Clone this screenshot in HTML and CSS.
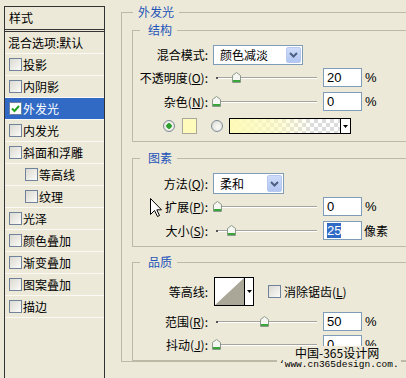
FILE: index.html
```html
<!DOCTYPE html>
<html lang="zh">
  <head>
    <meta charset="UTF-8" />
    <title>图层样式 - 外发光</title>
    <link rel="stylesheet" href="styles.css">
  </head>
  <body>
    <div class="dialog">
      <div class="style-list">
        <div class="list-head">样式</div>
        <div class="list-item blend">混合选项:默认</div>
        <div class="list-item"><span class="check"></span>投影</div>
        <div class="list-item"><span class="check"></span>内阴影</div>
        <div class="list-item selected">
          <span class="check on"><svg width="11" height="11" viewBox="0 0 11 11"><path d="M2 5.5 L4.5 8 L9 3" fill="none" stroke="#21a121" stroke-width="2"/></svg></span>外发光
        </div>
        <div class="list-item"><span class="check"></span>内发光</div>
        <div class="list-item"><span class="check"></span>斜面和浮雕</div>
        <div class="list-item sub"><span class="check"></span>等高线</div>
        <div class="list-item sub"><span class="check"></span>纹理</div>
        <div class="list-item"><span class="check"></span>光泽</div>
        <div class="list-item"><span class="check"></span>颜色叠加</div>
        <div class="list-item"><span class="check"></span>渐变叠加</div>
        <div class="list-item"><span class="check"></span>图案叠加</div>
        <div class="list-item"><span class="check"></span>描边</div>
      </div>

      <fieldset class="group outer">
        <legend>外发光</legend>

        <fieldset class="group inner struct">
          <legend>结构</legend>
          <div class="row h20">
            <span class="lbl">混合模式:</span>
            <div class="select mode"><span>颜色减淡</span><span class="arrow-btn"><svg width="9" height="6" viewBox="0 0 9 6"><path d="M1 1 L4.5 4.5 L8 1" fill="none" stroke="#4d6185" stroke-width="2"/></svg></span></div>
          </div>
          <div class="row h19 mt3">
            <span class="lbl">不透明度(<u>O</u>):</span>
            <div class="slider"><span class="thumb" style="left:23px"><svg width="9" height="11" viewBox="0 0 9 11"><path d="M0.5 10.5 V3.5 L4.5 0.5 L8.5 3.5 V10.5 Z" fill="#f6f6f2" stroke="#8a9a8a"/><rect x="1" y="8" width="7" height="2" fill="#3aa53a"/></svg></span></div>
            <span class="num">20</span><span class="unit">%</span>
          </div>
          <div class="row h19 mt5">
            <span class="lbl">杂色(<u>N</u>):</span>
            <div class="slider"><span class="thumb" style="left:3px"><svg width="9" height="11" viewBox="0 0 9 11"><path d="M0.5 10.5 V3.5 L4.5 0.5 L8.5 3.5 V10.5 Z" fill="#f6f6f2" stroke="#8a9a8a"/><rect x="1" y="8" width="7" height="2" fill="#3aa53a"/></svg></span></div>
            <span class="num">0</span><span class="unit">%</span>
          </div>
          <div class="row color-row">
            <span class="radio on"></span>
            <span class="swatch"></span>
            <span class="radio second"></span>
            <div class="gradient-box">
              <span class="gradient"></span>
              <span class="mini-arrow"><svg width="5" height="3" viewBox="0 0 5 3"><path d="M0 0 H5 L2.5 3 Z" fill="#000"/></svg></span>
            </div>
          </div>
        </fieldset>

        <fieldset class="group inner elements">
          <legend>图素</legend>
          <div class="row h21">
            <span class="lbl">方法(<u>Q</u>):</span>
            <div class="select method"><span>柔和</span><span class="arrow-btn"><svg width="9" height="6" viewBox="0 0 9 6"><path d="M1 1 L4.5 4.5 L8 1" fill="none" stroke="#4d6185" stroke-width="2"/></svg></span></div>
          </div>
          <div class="row h19 mt3">
            <span class="lbl">扩展(<u>P</u>):</span>
            <div class="slider"><span class="thumb" style="left:4px"><svg width="9" height="11" viewBox="0 0 9 11"><path d="M0.5 10.5 V3.5 L4.5 0.5 L8.5 3.5 V10.5 Z" fill="#f6f6f2" stroke="#8a9a8a"/><rect x="1" y="8" width="7" height="2" fill="#3aa53a"/></svg></span></div>
            <span class="num">0</span><span class="unit">%</span>
          </div>
          <div class="row h19 mt5">
            <span class="lbl">大小(<u>S</u>):</span>
            <div class="slider"><span class="thumb" style="left:18px"><svg width="9" height="11" viewBox="0 0 9 11"><path d="M0.5 10.5 V3.5 L4.5 0.5 L8.5 3.5 V10.5 Z" fill="#f6f6f2" stroke="#8a9a8a"/><rect x="1" y="8" width="7" height="2" fill="#3aa53a"/></svg></span></div>
            <span class="num"><span class="sel-text">25</span></span><span class="unit cjk">像素</span>
          </div>
        </fieldset>

        <fieldset class="group inner quality">
          <legend>品质</legend>
          <div class="row h29">
            <span class="lbl">等高线:</span>
            <div class="contour">
              <span class="curve"><svg width="29" height="27" viewBox="0 0 29 27"><rect width="29" height="27" fill="#fff"/><path d="M0 27 L29 0 V27 Z" fill="#aaa698"/></svg></span>
              <span class="mini-arrow"><svg width="5" height="3" viewBox="0 0 5 3"><path d="M0 0 H5 L2.5 3 Z" fill="#000"/></svg></span>
            </div>
            <span class="check aa"></span><span class="aa-text">消除锯齿(<u>L</u>)</span>
          </div>
          <div class="row h19 mt6">
            <span class="lbl">范围(<u>R</u>):</span>
            <div class="slider"><span class="thumb" style="left:51px"><svg width="9" height="11" viewBox="0 0 9 11"><path d="M0.5 10.5 V3.5 L4.5 0.5 L8.5 3.5 V10.5 Z" fill="#f6f6f2" stroke="#8a9a8a"/><rect x="1" y="8" width="7" height="2" fill="#3aa53a"/></svg></span></div>
            <span class="num">50</span><span class="unit">%</span>
          </div>
          <div class="row h19 mt4">
            <span class="lbl">抖动(<u>J</u>):</span>
            <div class="slider"><span class="thumb" style="left:3px"><svg width="9" height="11" viewBox="0 0 9 11"><path d="M0.5 10.5 V3.5 L4.5 0.5 L8.5 3.5 V10.5 Z" fill="#f6f6f2" stroke="#8a9a8a"/><rect x="1" y="8" width="7" height="2" fill="#3aa53a"/></svg></span></div>
            <span class="num">0</span><span class="unit">%</span>
          </div>
        </fieldset>
      </fieldset>

      <svg class="cursor" width="13" height="20" viewBox="0 0 13 20"><path d="M0.5 0.5 V16.5 L4.5 12.5 L7.5 18.5 L9.5 17.5 L6.8 11.8 L11.5 11.8 Z" fill="#fff" stroke="#000"/></svg>

      <div class="watermark">
        <span class="wm-cn">中国-365设计网</span>
        <span class="wm-url">‘www.cn365design.com.</span>
      </div>
    </div>
  </body>
</html>
```

FILE: styles.css
```css
body {
  margin: 0;
  background: #ece9d8;
  font-family: "Noto Sans CJK SC", "Liberation Sans", sans-serif;
  font-size: 12px;
  color: #000;
  overflow: hidden;
}

.dialog {
  position: relative;
  display: flex;
  align-items: flex-start;
  width: 406px;
  height: 378px;
  overflow: hidden;
}

/* left list of styles */
.style-list {
  margin: 6px 0 0 4px;
  width: 101px;
  height: 400px;
  flex-shrink: 0;
  box-sizing: border-box;
  border: 1px solid #333;
  border-bottom: none;
}
.list-head {
  height: 22px;
  line-height: 22px;
  padding-left: 4px;
  border-bottom: 3px double #333;
}
.list-item {
  height: 21px;
  display: flex;
  align-items: center;
  padding-left: 4px;
  border-bottom: 1px solid #faf9f3;
  line-height: 14px;
}
.list-item.blend {
  padding-left: 3px;
}
.list-item.sub {
  padding-left: 20px;
}
.list-item.selected {
  background: #316ac5;
  color: #fff;
}

.check {
  width: 13px;
  height: 13px;
  margin-right: 1px;
  flex-shrink: 0;
  box-sizing: border-box;
  border: 1px solid #71839a;
  background: linear-gradient(135deg, #dad9d1, #fbfbf8);
}
.check.on {
  background: #fff;
  display: flex;
  align-items: center;
  justify-content: center;
}

/* group boxes */
.group {
  margin: 0;
  min-width: 0;
  box-sizing: border-box;
  border: 1px solid #bcb9a6;
}
.group legend {
  padding: 0 5px;
  margin-left: 1px;
  line-height: 14px;
  color: #1f54b8;
}
.outer {
  margin: 5px 0 0 16px;
  width: 330px;
  flex-shrink: 0;
  padding: 4px 0 0 10px;
}
.inner {
  width: 300px;
  padding: 8px 0 6px 0;
}
.inner legend {
  margin-left: 7px;
  padding: 0 5px 0 8px;
}
.struct {
  padding-bottom: 7px;
}
.elements {
  margin-top: 9px;
}
.quality {
  margin-top: 8px;
}

/* rows */
.row {
  display: flex;
  align-items: center;
}
.h19 { height: 19px; }
.h20 { height: 20px; }
.h21 { height: 21px; }
.h29 { height: 29px; }
.mt3 { margin-top: 3px; }
.mt4 { margin-top: 4px; }
.mt5 { margin-top: 5px; }
.mt6 { margin-top: 6px; }

.lbl {
  width: 75px;
  margin-right: 5px;
  flex-shrink: 0;
  text-align: right;
  line-height: 14px;
  white-space: nowrap;
}

.select {
  height: 100%;
  box-sizing: border-box;
  display: flex;
  align-items: center;
  justify-content: space-between;
  padding: 0 1px 0 6px;
  border: 1px solid #7f9db9;
  background: #fff;
  line-height: 14px;
}
.select.mode { width: 90px; }
.select.method { width: 71px; }
.arrow-btn {
  width: 15px;
  height: 16px;
  box-sizing: border-box;
  display: flex;
  align-items: center;
  justify-content: center;
  border: 1px solid #b7c9ef;
  border-radius: 2px;
  background: linear-gradient(#cfdcfa, #b2c6f2);
}
.method .arrow-btn { height: 17px; }

.slider {
  position: relative;
  width: 106px;
  height: 19px;
  margin-right: 4px;
  flex-shrink: 0;
}
.slider::before {
  content: "";
  position: absolute;
  left: 3px;
  right: 2px;
  top: 9px;
  border-top: 1px solid #a5a49c;
  border-bottom: 1px solid #fff;
}
.slider::after {
  content: "";
  position: absolute;
  left: 3px;
  top: 9px;
  width: 2px;
  height: 2px;
  background: #555;
}
.thumb {
  position: absolute;
  top: 4px;
  margin-left: -4px;
  width: 9px;
  height: 11px;
  z-index: 1;
  line-height: 0;
}

.num {
  width: 39px;
  height: 19px;
  box-sizing: border-box;
  padding-left: 3px;
  border: 1px solid #7f9db9;
  background: #fff;
  font: 13px/17px "Liberation Sans", sans-serif;
}
.sel-text {
  background: #316ac5;
  color: #fff;
}
.unit {
  margin-left: 3px;
  font: 13px "Liberation Sans", sans-serif;
}
.unit.cjk {
  font: 12px "Noto Sans CJK SC", sans-serif;
  margin-left: 2px;
}

/* colour row */
.color-row {
  height: 16px;
  margin-top: 7px;
  padding-left: 30px;
}
.radio {
  width: 12px;
  height: 12px;
  box-sizing: border-box;
  border: 1px solid #7d8a97;
  border-radius: 50%;
  background: radial-gradient(circle at 60% 60%, #fbfbf8, #d9d8d0);
}
.radio.on {
  background: radial-gradient(circle, #2f9f2f 0 2.5px, #f3f3ef 3px, #d9d8d0 100%);
}
.radio.second {
  margin-left: 14px;
}
.swatch {
  width: 15px;
  height: 16px;
  margin-left: 7px;
  box-sizing: border-box;
  border: 1px solid #a9a79a;
  background: #fefbbb;
}
.gradient-box {
  display: flex;
  width: 122px;
  height: 16px;
  margin-left: 6px;
  box-sizing: border-box;
  border: 1px solid #000;
}
.gradient {
  flex: 1;
  background:
    linear-gradient(to right, #fefbb8 0%, rgba(254, 251, 184, 0.6) 45%, rgba(254, 251, 184, 0) 75%),
    repeating-conic-gradient(#dcdcdc 0 25%, #fff 0 50%) 0 0 / 8px 8px;
}
.mini-arrow {
  width: 9px;
  display: flex;
  align-items: center;
  justify-content: center;
  border-left: 1px solid #000;
  background: #fff;
}

/* contour */
.contour {
  display: flex;
  width: 40px;
  height: 29px;
  margin-left: 1px;
  box-sizing: border-box;
  border: 1px solid #000;
}
.curve {
  line-height: 0;
}
.check.aa {
  margin-left: 14px;
  margin-right: 3px;
}
.aa-text {
  line-height: 14px;
}

/* overlays */
.cursor {
  position: absolute;
  left: 150px;
  top: 198px;
}
.watermark {
  position: absolute;
  left: 277px;
  top: 346px;
  display: flex;
  flex-direction: column;
  align-items: flex-start;
}
.wm-cn {
  margin-left: 15px;
  padding: 0 3px;
  background: #ece9d8;
  font-size: 12px;
  line-height: 13px;
}
.wm-url {
  padding: 0 2px;
  background: #ece9d8;
  font: 9.5px/11px "Liberation Mono", monospace;
}
```
